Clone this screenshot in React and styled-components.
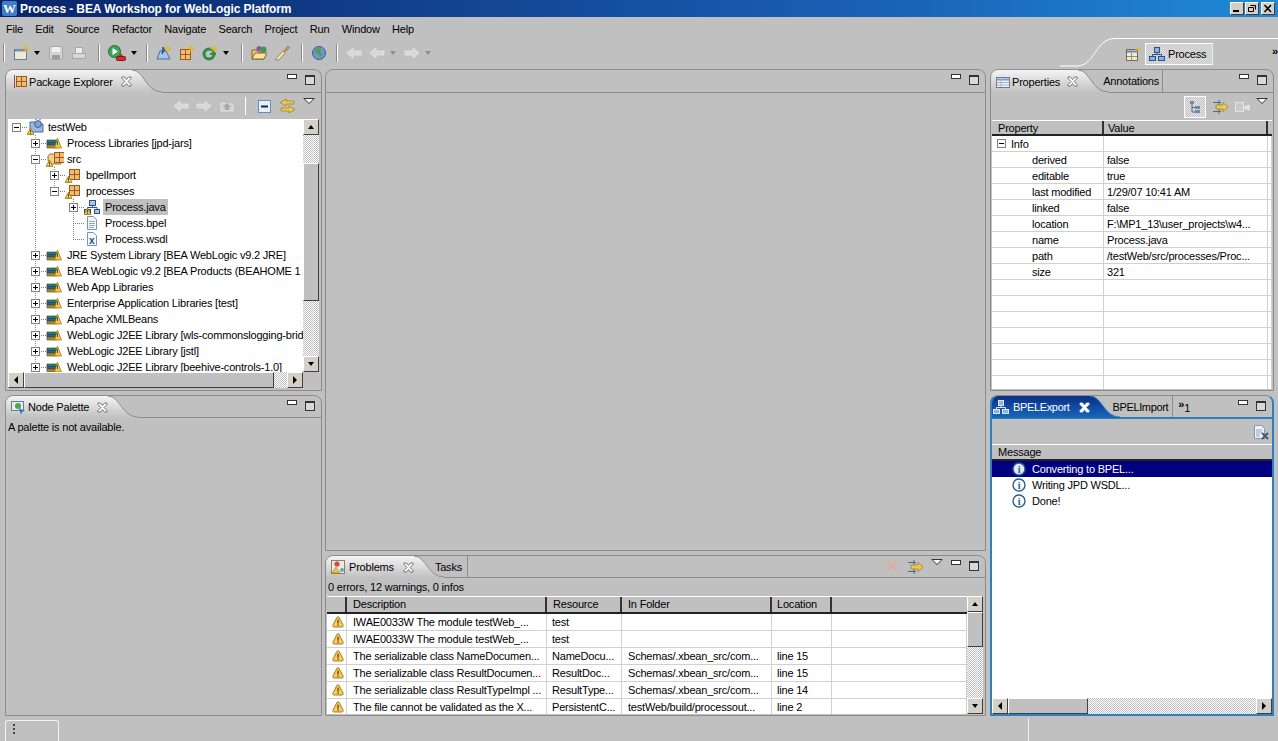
import React from 'react';
import styled, { createGlobalStyle } from 'styled-components';

const GlobalStyle = createGlobalStyle`
  html, body { margin: 0; padding: 0; height: 100%; background: #c0c0c0; }
  body { font-family: "Liberation Sans", Arial, sans-serif; font-size: 11px; letter-spacing: -0.2px; color: #000; overflow: hidden; }
  #root { height: 100%; }
`;

const dither = `repeating-conic-gradient(#fff 0 25%, #c0c0c0 0 50%) 0 0 / 2px 2px`;

const Page = styled.div`
  width: 1278px;
  height: 741px;
  display: flex;
  flex-direction: column;
  background: #c0c0c0;
  overflow: hidden;
`;

const TitleBar = styled.div`
  height: 17px;
  flex: none;
  display: flex;
  align-items: center;
  padding: 0 3px 0 2px;
  background: linear-gradient(90deg, #0a246a 0%, #1a62b8 70%, #1f8ad6 100%);
`;

const TitleText = styled.div`
  color: #fff;
  font-weight: bold;
  font-size: 12px;
  letter-spacing: -0.1px;
  flex: 1;
  margin-left: 3px;
  white-space: nowrap;
`;

const WinButton = styled.div`
  width: 14px;
  height: 13px;
  margin-left: ${(p) => p.$ml || 1}px;
  background: #d4d0c8;
  box-sizing: border-box;
  border: 1px solid;
  border-color: #fff #404040 #404040 #fff;
  display: flex;
  align-items: center;
  justify-content: center;
`;

const MenuBar = styled.div`
  height: 23px;
  flex: none;
  display: flex;
  align-items: center;
  padding-left: 6px;
  gap: 12.4px;
`;

const MenuItem = styled.span`
  font-size: 11px;
`;

const MainToolbar = styled.div`
  height: 29px;
  flex: none;
  display: flex;
  align-items: flex-start;
  padding-left: 3px;
`;

const ToolGroup = styled.div`
  height: 26px;
  display: flex;
  align-items: center;
  gap: 7px;
  padding: 0 ${(p) => p.$end ?? 11}px 0 8px;
`;

const ToolSep = styled.div`
  width: 1px;
  height: 18px;
  margin-top: 4px;
  background: #8a8a8a;
  border-right: 1px solid #fff;
`;

const ToolSpacer = styled.div`
  flex: 1;
`;

const CaretWrap = styled.div`
  margin-left: -3px;
  width: 8px;
  display: flex;
  justify-content: center;
`;

const Caret = styled.div`
  width: 0;
  height: 0;
  border-left: 3.5px solid transparent;
  border-right: 3.5px solid transparent;
  border-top: 4px solid ${(p) => (p.$off ? '#8d8d8d' : '#000')};
`;

const PerspectiveCurve = styled.svg`
  width: 135px;
  height: 29px;
  flex: none;
  display: block;
  margin-top: -2px;
`;

const PerspectiveBar = styled.div`
  width: 163px;
  height: 30px;
  flex: none;
  margin-top: -2px;
  box-sizing: border-box;
  border-top: 1px solid #fff;
  display: flex;
  align-items: center;
  padding-left: 10px;
  gap: 4px;
`;

const PerspectiveButton = styled.div`
  width: 68px;
  height: 22px;
  box-sizing: border-box;
  border: 1px solid #fff;
  border-right-color: #efefef;
  background: repeating-conic-gradient(#dedede 0 25%, #c8c8c8 0 50%) 0 0 / 2px 2px;
  display: flex;
  align-items: center;
  padding-left: 3px;
  gap: 3px;
  font-size: 11px;
`;

const Chevrons = styled.span`
  margin-left: auto;
  font-size: 11px;
  font-weight: bold;
  position: relative;
  top: -3px;
`;

const Workspace = styled.div`
  flex: 1;
  min-height: 0;
  display: grid;
  grid-template-columns: 317px 661px 285px;
  column-gap: 3px;
  padding-left: 5px;
`;

const Column = styled.div`
  display: flex;
  flex-direction: column;
  gap: 4px;
  min-height: 0;
  padding-left: ${(p) => p.$inset ?? 0}px;
`;

const Panel = styled.section`
  box-sizing: border-box;
  height: ${(p) => p.$h}px;
  flex: none;
  display: flex;
  flex-direction: column;
  border: 1px solid #8c8c8c;
  border-radius: 8px 8px 0 0;
  background: #c0c0c0;
  overflow: hidden;
`;

const TabBar = styled.div`
  height: ${(p) => (p.$short ? 21 : 22)}px;
  flex: none;
  display: flex;
  align-items: stretch;
  border-bottom: 1px solid ${(p) => (p.$active ? '#2f7fbf' : '#8c8c8c')};
  ${(p) => (p.$active ? 'border-bottom-width: 2px;' : '')}
`;

const ActiveTab = styled.div`
  display: flex;
  align-items: center;
  height: ${(p) => (p.$short ? 22 : 23)}px;
  padding-left: ${(p) => p.$pad ?? 5}px;
  gap: ${(p) => p.$gap ?? 2}px;
  color: ${(p) => (p.$blue ? '#fff' : '#000')};
  background: ${(p) => (p.$blue
    ? 'linear-gradient(#0a2f86, #1668bb)'
    : 'linear-gradient(#f4f4f4, #c0c0c0)')};
  font-size: 11px;
  letter-spacing: ${(p) => (p.$tight ? '-0.35px' : 'inherit')};
  white-space: nowrap;
`;

const TabCurve = styled.svg`
  width: 30px;
  height: ${(p) => (p.$short ? 22 : 23)}px;
  flex: none;
  display: block;
`;

const InactiveTab = styled.div`
  display: flex;
  align-items: center;
  padding: 0 ${(p) => p.$right ?? 4}px 0 0;
  margin-left: ${(p) => p.$left ?? 0}px;
  border-right: 1px solid #8c8c8c;
  font-size: 11px;
  letter-spacing: ${(p) => (p.$tight ? '-0.35px' : 'inherit')};
  white-space: nowrap;
`;

const OverflowTab = styled.div`
  margin-left: 5px;
  font-size: 11px;
  line-height: 10px;
  padding-top: 3px;
  font-weight: bold;
  sub { font-weight: normal; font-size: 11px; vertical-align: -4px; }
`;

const TabSpacer = styled.div`
  flex: 1;
`;

const TabTools = styled.div`
  display: flex;
  align-items: flex-start;
  padding: 3px 6px 0 0;
  gap: ${(p) => p.$gap ?? 8}px;
`;

const MinBtn = styled.div`
  width: 8px;
  height: 3px;
  margin-top: 1px;
  background: #fff;
  border: 1px solid #333;
`;

const MaxBtn = styled.div`
  width: 8px;
  height: 7px;
  margin-top: 2px;
  background: #d8d8d8;
  border: 1px solid #333;
  border-top-width: 2px;
`;

const ViewMenu = styled.div`
  width: 0;
  height: 0;
  border-left: 6px solid transparent;
  border-right: 6px solid transparent;
  border-top: 6px solid #333;
  position: relative;
  &::after {
    content: '';
    position: absolute;
    left: -4px;
    top: -5px;
    border-left: 4px solid transparent;
    border-right: 4px solid transparent;
    border-top: 4px solid #fff;
  }
`;

const ViewToolbar = styled.div`
  height: ${(p) => p.$h ?? 26}px;
  flex: none;
  display: flex;
  align-items: center;
  justify-content: flex-end;
  gap: ${(p) => p.$gap ?? 7}px;
  padding-right: ${(p) => p.$right ?? 6}px;
`;

const ToolbarLine = styled.div`
  width: 1px;
  height: 18px;
  margin: 0 3px;
  background: #fff;
`;

const MenuSlot = styled.div`
  align-self: flex-start;
  margin-top: ${(p) => p.$top ?? 5}px;
`;

const ToggledTool = styled.div`
  width: 22px;
  height: 22px;
  box-sizing: border-box;
  border: 1px solid #fff;
  background: repeating-conic-gradient(#e6e6e6 0 25%, #c4c4c4 0 50%) 0 0 / 2px 2px;
  display: flex;
  align-items: center;
  justify-content: center;
`;

const TreeFrame = styled.div`
  flex: none;
  height: 269px;
  margin: 0 2px 0 2px;
  display: grid;
  grid-template-columns: 295px 16px;
  grid-template-rows: 253px 16px;
`;

const TreeArea = styled.div`
  background: #fff;
  overflow: hidden;
`;

const TreeRowWrap = styled.div`
  height: 16px;
  display: flex;
  align-items: stretch;
  white-space: nowrap;
`;

const GuideCell = styled.div`
  width: 19px;
  flex: none;
  background: ${(p) => (p.$line
    ? 'repeating-linear-gradient(#808080 0 1px, transparent 1px 2px) 8px 0 / 1px 100% no-repeat'
    : 'none')};
`;

const ExpanderCell = styled.div`
  width: 19px;
  flex: none;
  display: flex;
  align-items: center;
  background:
    repeating-linear-gradient(90deg, #808080 0 1px, transparent 1px 2px) 8px 8px / 11px 1px no-repeat
    ${(p) => (p.$down ? ', repeating-linear-gradient(#808080 0 1px, transparent 1px 2px) 8px 8px / 1px 8px no-repeat' : '')}
    ${(p) => (p.$up ? ', repeating-linear-gradient(#808080 0 1px, transparent 1px 2px) 8px 0 / 1px 8px no-repeat' : '')};
`;

const ExpanderBox = styled.div`
  width: 9px;
  height: 9px;
  margin-left: 4px;
  flex: none;
  position: relative;
  box-sizing: border-box;
  border: 1px solid #808080;
  background: #fff;
  &::before {
    content: '';
    position: absolute;
    left: 1px;
    right: 1px;
    top: 3px;
    height: 1px;
    background: #000;
  }
  ${(p) => (p.$plus ? `&::after {
    content: '';
    position: absolute;
    top: 1px;
    bottom: 1px;
    left: 3px;
    width: 1px;
    background: #000;
  }` : '')}
`;

const RowIcon = styled.div`
  width: 16px;
  height: 16px;
  flex: none;
`;

const RowLabel = styled.span`
  margin-left: 3px;
  padding: 0 2px;
  line-height: 16px;
  font-size: 11px;
  background: ${(p) => (p.$selected ? '#c0c0c0' : 'transparent')};
`;

const VScroll = styled.div`
  width: 16px;
  display: flex;
  flex-direction: column;
  background: ${dither};
  overflow: hidden;
`;

const HScroll = styled.div`
  height: 16px;
  flex: none;
  display: flex;
  background: ${dither};
  overflow: hidden;
`;

const ScrollButton = styled.div`
  width: 16px;
  height: 16px;
  flex: none;
  box-sizing: border-box;
  background: #d4d0c8;
  border: 1px solid;
  border-color: #fff #404040 #404040 #fff;
  display: flex;
  align-items: center;
  justify-content: center;
`;

const Thumb = styled.div`
  flex: none;
  box-sizing: border-box;
  width: ${(p) => (p.$w ? `${p.$w}px` : '16px')};
  height: ${(p) => (p.$h ? `${p.$h}px` : '16px')};
  background: #c0c0c0;
  border: 1px solid;
  border-color: #fff #404040 #404040 #fff;
`;

const Track = styled.div`
  flex: ${(p) => (p.$size ? `0 0 ${p.$size}px` : '1')};
`;

const ScrollCorner = styled.div`
  background: #c0c0c0;
`;

const PropertyTable = styled.div`
  margin: 0 1px;
  height: 269px;
  overflow: hidden;
  display: flex;
  flex-direction: column;
`;

const GridRow = styled.div`
  display: grid;
  grid-template-columns: ${(p) => p.$cols};
  height: ${(p) => p.$h ?? 16}px;
  flex: none;
  background: #fff;
`;

const HeaderRow = styled(GridRow)`
  background: #c0c0c0;
  height: ${(p) => p.$h ?? 17}px;
  box-sizing: border-box;
  border-top: 1px solid #fff;
  border-bottom: 2px solid #222;
`;

const HeaderCell = styled.div`
  padding-left: ${(p) => p.$pad ?? 5}px;
  border-right: 2px solid ${(p) => (p.$last ? 'transparent' : '#333')};
  line-height: 14px;
  font-size: 11px;
  white-space: nowrap;
  overflow: hidden;
`;

const Cell = styled.div`
  box-sizing: border-box;
  border-right: 1px solid #d0d0d0;
  border-bottom: 1px solid #d0d0d0;
  padding-left: ${(p) => p.$pad ?? 3}px;
  font-size: 11px;
  white-space: nowrap;
  overflow: hidden;
  display: flex;
  align-items: center;
`;

const InfoToggle = styled(ExpanderBox)`
  margin: 0 5px 0 0;
`;

const PaletteNote = styled.div`
  padding: 1px 2px;
  font-size: 11px;
  line-height: 16px;
`;

const ProblemsSummary = styled.div`
  height: 18px;
  flex: none;
  padding: 1px 2px 0;
  box-sizing: border-box;
  line-height: 16px;
  font-size: 11px;
`;

const ProblemsBody = styled.div`
  margin: 0 3px 0 1px;
  height: 118px;
  display: grid;
  grid-template-columns: 640px 16px;
`;

const ProblemsRows = styled.div`
  overflow: hidden;
  display: flex;
  flex-direction: column;
  background: #fff;
`;

const MessageArea = styled.div`
  flex: 1;
  min-height: 0;
  display: flex;
  flex-direction: column;
  background: #fff;
`;

const MessageRow = styled.div`
  height: 16px;
  display: flex;
  align-items: center;
  padding-left: 20px;
  gap: 6px;
  flex: none;
  font-size: 11px;
  background: ${(p) => (p.$selected ? '#000080' : 'transparent')};
  color: ${(p) => (p.$selected ? '#fff' : '#000')};
`;

const MessageFill = styled.div`
  flex: 1;
`;

const ActivePanel = styled(Panel)`
  border: 2px solid #2f7fbf;
  border-top: 1px solid #8c8c8c;
`;

const StatusBar = styled.div`
  height: 25px;
  flex: none;
  display: flex;
  align-items: flex-end;
  padding-left: 5px;
`;

const StatusGrip = styled.div`
  width: 54px;
  height: 21px;
  box-sizing: border-box;
  border: 1px solid #f2f2f2;
  border-bottom: none;
  border-radius: 3px 3px 0 0;
  padding: 3px 0 0 7px;
`;

const GripDots = styled.div`
  width: 2px;
  height: 11px;
  background: repeating-linear-gradient(#444 0 2px, transparent 2px 4px);
`;

const StatusDivider = styled.div`
  width: 1px;
  height: 23px;
  margin-left: 969px;
  background: #f2f2f2;
`;

const CloseSvg = styled.svg`
  display: block;
  flex: none;
  margin-left: 6px;
`;

/* ---- drawn icons ---- */

const Svg = ({ w = 16, h = 16, children }) => (
  <svg width={w} height={h} viewBox={`0 0 ${w} ${h}`} style={{ display: 'block' }}>{children}</svg>
);

const WarnBadge = () => (
  <g>
    <path d="M3.5 9 L7 15.5 L0 15.5 Z" fill="#f6c83c" stroke="#8a6a10" strokeWidth=".7" />
    <rect x="3.1" y="11" width=".9" height="2.4" fill="#333" />
    <rect x="3.1" y="14" width=".9" height=".9" fill="#333" />
  </g>
);

const PackageGrid = ({ x = 3, y = 2 }) => (
  <g stroke="#a05a1c" strokeWidth="1" fill="#edbd78">
    <rect x={x + 0.5} y={y + 0.5} width="5" height="5" />
    <rect x={x + 5.5} y={y + 0.5} width="5" height="5" />
    <rect x={x + 0.5} y={y + 5.5} width="5" height="5" />
    <rect x={x + 5.5} y={y + 5.5} width="5" height="5" />
  </g>
);

const PackageIcon = () => <Svg><PackageGrid x={4} y={2} /><WarnBadge /></Svg>;

const LibraryIcon = () => (
  <Svg>
    <rect x="1" y="5" width="10" height="2.5" fill="#2f7d5c" stroke="#1c4a36" strokeWidth=".6" />
    <rect x="1" y="7.5" width="10" height="2.5" fill="#2a5e9c" stroke="#1c3960" strokeWidth=".6" />
    <rect x="1" y="10" width="10" height="3" fill="#a98b2a" stroke="#5a4a10" strokeWidth=".6" />
    <path d="M11.5 3 L15.5 13 L8.5 13 Z" fill="#f0c63c" stroke="#8a6a10" strokeWidth=".6" />
    <rect x="11" y="6" width="1" height="4" fill="#555" />
  </Svg>
);

const ProjectIcon = () => (
  <Svg w={18}>
    <path d="M3 3 h6 l2 2 h5 v8 h-13 z" fill="#9cb8dc" stroke="#4a6a98" />
    <circle cx="11" cy="5" r="3.4" fill="#7fa6d8" stroke="#2a4f88" strokeWidth=".8" />
    <path d="M9 1 v-1 M13 1 v-1" stroke="#2a4f88" />
    <WarnBadge />
  </Svg>
);

const SrcIcon = () => (
  <Svg w={18}>
    <path d="M2 6 C2 2 8 2 9 5 L15 5 L15 13 L4 13 C2 11 2 9 2 6Z" fill="#f2d08a" stroke="#a0702a" />
    <PackageGrid x={8} y={1} />
    <WarnBadge />
  </Svg>
);

const ProcessNodes = () => (
  <g stroke="#27508f" strokeWidth="1">
    <rect x="5.5" y="1.5" width="6" height="5" fill="#a9c6ea" />
    <rect x="0.5" y="10.5" width="6" height="4" fill="#a9c6ea" />
    <rect x="10.5" y="10.5" width="5" height="4" fill="#a9c6ea" />
    <path d="M8.5 6.5 V8.5 H3.5 V10.5 M8.5 8.5 H13 V10.5" fill="none" />
  </g>
);

const ProcessIcon = () => <Svg><ProcessNodes /><WarnBadge /></Svg>;

const FileIcon = () => (
  <Svg>
    <path d="M3.5 1.5 h6 l3 3 v10 h-9 z" fill="#f4f8fc" stroke="#7a94b4" />
    <path d="M5 6.5 h6 M5 8.5 h6 M5 10.5 h6 M5 12.5 h5" stroke="#8ea8c8" />
  </Svg>
);

const WsdlIcon = () => (
  <Svg>
    <path d="M3.5 1.5 h6 l3 3 v10 h-9 z" fill="#f4f8fc" stroke="#7a94b4" />
    <text x="5" y="13" fontSize="10" fontWeight="bold" fontFamily="Liberation Sans" fill="#24508c">x</text>
  </Svg>
);

const CloseX = ({ light }) => (
  <CloseSvg width="11" height="11" viewBox="0 0 11 11">
    <path
      d="M1 1 h2.5 L5.5 3.5 L7.5 1 H10 V2.5 L7 5.5 L10 8.5 V10 H7.5 L5.5 7.5 L3.5 10 H1 V8.5 L4 5.5 L1 2.5 Z"
      fill="#fff"
      stroke={light ? '#fff' : '#555'}
      strokeWidth=".8"
    />
  </CloseSvg>
);

const Curve = ({ blue, short }) => {
  const id = blue ? 'tab-blue' : 'tab-gray';
  return (
    <TabCurve $short={short} viewBox="0 0 30 23" preserveAspectRatio="none">
      <defs>
        <linearGradient id={id} x1="0" y1="0" x2="0" y2="1">
          <stop offset="0" stopColor={blue ? '#0a2f86' : '#f4f4f4'} />
          <stop offset="1" stopColor={blue ? '#1668bb' : '#c0c0c0'} />
        </linearGradient>
      </defs>
      <path d="M0 0 C12 0 14 22 30 22 L30 23 L0 23 Z" fill={`url(#${id})`} />
      <path d="M0 0 C12 0 14 22 30 22" fill="none" stroke={blue ? '#2f7fbf' : '#8c8c8c'} />
    </TabCurve>
  );
};

const ExplorerTabIcon = () => (
  <Svg>
    <path d="M3.5 1 V14" stroke="#9a4a30" />
    <PackageGrid x={5} y={2} />
  </Svg>
);

const PaletteTabIcon = () => (
  <Svg>
    <rect x="1.5" y="2.5" width="12" height="9" fill="#e4ecf4" stroke="#6a7c90" />
    <circle cx="8" cy="7" r="3" fill="#4aa84a" />
    <path d="M9 9 L15 12 L12 13 L11 16 Z" fill="#3a72b8" />
  </Svg>
);

const PropsTabIcon = () => (
  <Svg>
    <rect x="1.5" y="3.5" width="13" height="10" fill="#eef2f8" stroke="#6a7c90" />
    <path d="M1.5 5.5 h13" stroke="#7a9cc8" strokeWidth="2" />
    <path d="M2 8.5 h12 M2 11 h12 M6 5 v8" stroke="#a8b4c4" />
  </Svg>
);

const ProblemsTabIcon = () => (
  <Svg>
    <rect x="1.5" y="1.5" width="13" height="13" fill="#efeae0" stroke="#8a7f70" />
    <circle cx="7" cy="5" r="2.6" fill="#d04848" />
    <path d="M6 8 L10 14 L2 14 Z" fill="#f0c63c" stroke="#8a6a10" strokeWidth=".5" />
    <circle cx="12" cy="11" r="2" fill="#6a9ad8" />
  </Svg>
);

const NetworkTabIcon = ({ light }) => (
  <Svg>
    <g stroke={light ? '#dbe8f8' : '#27508f'} strokeWidth="1">
      <rect x="5.5" y="1.5" width="5" height="5" fill="#8fb2dc" />
      <rect x="0.5" y="10.5" width="6" height="4" fill="#8fb2dc" />
      <rect x="9.5" y="10.5" width="6" height="4" fill="#8fb2dc" />
      <path d="M8 6.5 V8.5 H3.5 V10.5 M8 8.5 H12.5 V10.5" fill="none" />
    </g>
  </Svg>
);

const NewIcon = () => (
  <Svg>
    <rect x="1.5" y="4.5" width="12" height="10" fill="#f2ead0" stroke="#5a7ca8" />
    <path d="M2 5.5 h11" stroke="#6f93c4" strokeWidth="2" />
    <path d="M13 0 v7 M9.5 3.5 h7 M10.5 1 l5 5 M15.5 1 l-5 5" stroke="#e8b820" />
  </Svg>
);

const SaveIcon = () => (
  <Svg>
    <path d="M1.5 1.5 h13 v13 h-13z" fill="#d4d4d4" stroke="#a8a8a8" />
    <rect x="4" y="2" width="8" height="5" fill="#f0f0f0" />
    <rect x="4" y="10" width="8" height="4" fill="#9c9c9c" />
  </Svg>
);

const PrintIcon = () => (
  <Svg>
    <rect x="4.5" y="2.5" width="7" height="6" fill="#ececec" stroke="#a8a8a8" />
    <rect x="1.5" y="8.5" width="13" height="5" fill="#d6d6d6" stroke="#a8a8a8" />
  </Svg>
);

const RunIcon = () => (
  <Svg w={18}>
    <circle cx="6.5" cy="6.5" r="6" fill="#3aa858" stroke="#1f6a34" />
    <path d="M4.5 3 L10 6.5 L4.5 10 Z" fill="#fff" />
    <rect x="8.5" y="11.5" width="9" height="4" rx="1" fill="#c83030" stroke="#7a1818" />
    <path d="M11 11 L13 8 L15 11Z" fill="#c83030" />
  </Svg>
);

const NewPackageIcon = () => (
  <Svg>
    <path d="M1 14 L4 6 H10 L14 14 Z" fill="#a8c4e8" stroke="#4a6c9c" />
    <path d="M6 9 L7 2 L9 5Z" fill="#3a72b8" stroke="#2a4f88" />
    <path d="M12 0 v7 M8.5 3.5 h7 M9.5 1 l5 5 M14.5 1 l-5 5" stroke="#e8b820" />
  </Svg>
);

const NewClassIcon = () => (
  <Svg>
    <PackageGrid x={1} y={4} />
    <path d="M12 0 v7 M8.5 3.5 h7 M9.5 1 l5 5 M14.5 1 l-5 5" stroke="#e8b820" />
  </Svg>
);

const NewRefreshIcon = () => (
  <Svg>
    <circle cx="7" cy="9" r="5" fill="none" stroke="#2f8a48" strokeWidth="3" />
    <rect x="8" y="8" width="6" height="2" fill="#2f8a48" />
    <path d="M12 0 v7 M8.5 3.5 h7 M9.5 1 l5 5 M14.5 1 l-5 5" stroke="#e8b820" />
  </Svg>
);

const OpenFolderIcon = () => (
  <Svg>
    <path d="M1 14 V5 h5 l1 2 h6 v7 Z" fill="#f0cc80" stroke="#8a6420" />
    <path d="M1 14 L4 8 H16 L13 14 Z" fill="#f8e2a8" stroke="#8a6420" />
    <circle cx="8" cy="3.5" r="2.5" fill="#8a52a8" />
    <circle cx="12.5" cy="4.5" r="3" fill="#3a9a4a" />
  </Svg>
);

const BrushIcon = () => (
  <Svg>
    <path d="M9 7 L14 1 L15.5 2.5 L10 8 Z" fill="#c89858" stroke="#8a6420" strokeWidth=".6" />
    <path d="M9 6 L11 8 L5 15 L1 15 Z" fill="#f2e6c0" stroke="#a08a50" />
  </Svg>
);

const GlobeIcon = () => (
  <Svg>
    <circle cx="8" cy="8" r="6.5" fill="#6a98d0" stroke="#3a5a88" />
    <path d="M5 3 L10 4 L9 7 L12 9 L9 12 L7 9 L4 7 Z" fill="#5a9a50" />
  </Svg>
);

const ArrowIcon = ({ dir = 'left', color = '#d8d8d8' }) => (
  <Svg>
    <path
      d={dir === 'left' ? 'M1 8 L7 3 V6 H15 V10 H7 V13 Z' : 'M15 8 L9 3 V6 H1 V10 H9 V13 Z'}
      fill={color}
      stroke="#ececec"
      strokeWidth=".6"
    />
  </Svg>
);

const UpFolderIcon = () => (
  <Svg>
    <path d="M2 13 V5 h4 l1 1 h7 v7 Z" fill="#d0d0d0" stroke="#e4e4e4" />
    <path d="M8 5 L12 9 H10 V12 H6 V9 H4 Z" fill="#a8a8a8" />
  </Svg>
);

const CollapseIcon = () => (
  <Svg>
    <rect x="2.5" y="2.5" width="12" height="12" fill="#e4eefa" stroke="#6a8cb8" />
    <path d="M5 8.5 h7" stroke="#223" strokeWidth="2" />
  </Svg>
);

const LinkIcon = () => (
  <Svg w={17}>
    <path d="M7 1 L1 4.5 L7 8 V6 H15 V3 H7 Z" fill="#f0c850" stroke="#9a7a20" strokeWidth=".7" />
    <path d="M10 8 L16 11.5 L10 15 V13 H2 V10 H10 Z" fill="#f0c850" stroke="#9a7a20" strokeWidth=".7" />
  </Svg>
);

const TreeModeIcon = () => (
  <Svg>
    <rect x="3" y="2" width="4" height="3" fill="#6f8ba8" />
    <path d="M5 5 V13 H8 M5 8.5 H8" stroke="#5a6a78" fill="none" />
    <rect x="8" y="7" width="5" height="3" fill="#6f8ba8" />
    <rect x="8" y="11" width="5" height="3" fill="#6f8ba8" />
  </Svg>
);

const FilterArrowsIcon = () => (
  <Svg>
    <path d="M1 3.5 h8 M1 12.5 h8" stroke="#4a6a8c" />
    <path d="M7 1 V15" stroke="#4a6a8c" />
    <path d="M4 6 H11 V3.5 L16 8 L11 12.5 V10 H4 Z" fill="#f0c850" stroke="#9a7a20" strokeWidth=".7" />
  </Svg>
);

const AdvancedIcon = () => (
  <Svg>
    <rect x="1" y="3" width="9" height="10" fill="#e4e4e4" />
    <path d="M2 5 h7 M2 7 h7 M2 9 h7 M2 11 h7" stroke="#b0b0b0" />
    <path d="M15 6 L10 8.5 L15 11 Z" fill="#dcdcdc" stroke="#f0f0f0" />
  </Svg>
);

const ClearLogIcon = () => (
  <Svg>
    <path d="M1.5 1.5 h7 l3 3 v10 h-10 z" fill="#f0f4fa" stroke="#8498b0" />
    <path d="M3 6 h6 M3 8 h6 M3 10 h4 M3 12 h4" stroke="#8ea8c8" />
    <path d="M9 9 L15 15 M15 9 L9 15" stroke="#4a5a6a" strokeWidth="2" />
  </Svg>
);

const RemoveIcon = () => (
  <Svg w={14} h={14}>
    <path d="M2 2 L12 12 M12 2 L2 12" stroke="#d8b0a8" strokeWidth="2.5" />
  </Svg>
);

const NewPerspectiveIcon = () => (
  <Svg>
    <rect x="1.5" y="3.5" width="11" height="11" fill="#f2ead0" stroke="#7a6a50" />
    <path d="M2 5.5 h10" stroke="#5f87bc" strokeWidth="2" />
    <path d="M6.5 7 V14 M2 10.5 H12" stroke="#9a8a70" />
    <path d="M13 0 v6 M10 3 h6" stroke="#e8b820" />
  </Svg>
);

const WarnIcon = () => (
  <svg width="12" height="12" viewBox="0 0 12 12" style={{ display: 'block', flex: 'none' }}>
    <path d="M6 .8 C6.8 .8 7 1.3 7.4 2 L11 9 C11.5 10 11 11 10 11 H2 C1 11 .5 10 1 9 L4.6 2 C5 1.3 5.2 .8 6 .8 Z" fill="#f6cc5a" stroke="#a07a20" />
    <rect x="5.4" y="3.6" width="1.3" height="4" fill="#5a4210" />
    <rect x="5.4" y="8.4" width="1.3" height="1.3" fill="#5a4210" />
  </svg>
);

const InfoIcon = ({ selected }) => (
  <svg width="14" height="14" viewBox="0 0 14 14" style={{ display: 'block', flex: 'none' }}>
    <circle cx="7" cy="7" r="6" fill={selected ? '#dfeaf6' : '#fff'} stroke="#24608c" strokeWidth="1.4" />
    <text x="7" y="11" textAnchor="middle" fontSize="10" fontWeight="bold" fontFamily="Liberation Serif" fill="#24608c">i</text>
  </svg>
);

const LogoIcon = () => (
  <svg width="15" height="15" viewBox="0 0 15 15" style={{ display: 'block', flex: 'none' }}>
    <rect width="15" height="15" rx="2" fill="#3f7fc8" />
    <text x="7.5" y="12" textAnchor="middle" fontSize="13" fontWeight="bold" fontFamily="Liberation Serif" fill="#fff">W</text>
  </svg>
);

const Tri = ({ dir }) => {
  const d = { up: 'M1 6 L4 2 L7 6 Z', down: 'M1 2 L4 6 L7 2 Z', left: 'M6 0 L2 4 L6 8 Z', right: 'M2 0 L6 4 L2 8 Z' }[dir];
  return (
    <svg width="8" height="8" viewBox="0 0 8 8" style={{ display: 'block' }}><path d={d} fill="#000" /></svg>
  );
};

const VerticalBar = ({ top, thumb, after }) => (
  <VScroll>
    <ScrollButton><Tri dir="up" /></ScrollButton>
    {top > 0 && <Track $size={top} />}
    <Thumb $h={thumb} />
    <Track $size={after} />
    <ScrollButton><Tri dir="down" /></ScrollButton>
  </VScroll>
);

const HorizontalBar = ({ thumb }) => (
  <HScroll>
    <ScrollButton><Tri dir="left" /></ScrollButton>
    <Thumb $w={thumb} />
    <Track />
    <ScrollButton><Tri dir="right" /></ScrollButton>
  </HScroll>
);

const PanelControls = ({ gap = 8 }) => (
  <TabTools $gap={gap}>
    <MinBtn />
    <MaxBtn />
  </TabTools>
);

/* ---- data ---- */

const menus = ['File', 'Edit', 'Source', 'Refactor', 'Navigate', 'Search', 'Project', 'Run', 'Window', 'Help'];

// guides: one entry per ancestor level, true where that level's dotted line runs through the row
const libraryRow = (label) => ({ label, guides: [false], plus: true, icon: <LibraryIcon />, up: true, down: true });

const treeRows = [
  { label: 'testWeb', guides: [], icon: <ProjectIcon /> },
  libraryRow('Process Libraries [jpd-jars]'),
  { label: 'src', guides: [false], icon: <SrcIcon />, up: true, down: true },
  { label: 'bpelImport', guides: [false, true], plus: true, icon: <PackageIcon />, up: true, down: true },
  { label: 'processes', guides: [false, true], icon: <PackageIcon />, up: true },
  { label: 'Process.java', guides: [false, true, false], plus: true, icon: <ProcessIcon />, selected: true, up: true, down: true },
  { label: 'Process.bpel', guides: [false, true, false], leaf: true, icon: <FileIcon />, up: true, down: true },
  { label: 'Process.wsdl', guides: [false, true, false], leaf: true, icon: <WsdlIcon />, up: true },
  libraryRow('JRE System Library [BEA WebLogic v9.2 JRE]'),
  libraryRow('BEA WebLogic v9.2 [BEA Products (BEAHOME 1'),
  libraryRow('Web App Libraries'),
  libraryRow('Enterprise Application Libraries [test]'),
  libraryRow('Apache XMLBeans'),
  libraryRow('WebLogic J2EE Library [wls-commonslogging-bridge]'),
  libraryRow('WebLogic J2EE Library [jstl]'),
  libraryRow('WebLogic J2EE Library [beehive-controls-1.0]'),
];

const properties = [
  ['derived', 'false'],
  ['editable', 'true'],
  ['last modified', '1/29/07 10:41 AM'],
  ['linked', 'false'],
  ['location', 'F:\\MP1_13\\user_projects\\w4...'],
  ['name', 'Process.java'],
  ['path', '/testWeb/src/processes/Proc...'],
  ['size', '321'],
  ['', ''], ['', ''], ['', ''], ['', ''], ['', ''], ['', ''], ['', ''], ['', ''],
];

const problems = [
  ['IWAE0033W The module testWeb_...', 'test', '', ''],
  ['IWAE0033W The module testWeb_...', 'test', '', ''],
  ['The serializable class NameDocumen...', 'NameDocu...', 'Schemas/.xbean_src/com...', 'line 15'],
  ['The serializable class ResultDocumen...', 'ResultDoc...', 'Schemas/.xbean_src/com...', 'line 15'],
  ['The serializable class ResultTypeImpl ...', 'ResultType...', 'Schemas/.xbean_src/com...', 'line 14'],
  ['The file cannot be validated as the X...', 'PersistentC...', 'testWeb/build/processout...', 'line 2'],
];

const messages = ['Converting to BPEL...', 'Writing JPD WSDL...', 'Done!'];

const propCols = '112px 164px 4px';
const problemCols = '20px 200px 75px 150px 60px 135px';

const TreeRow = ({ row }) => (
  <TreeRowWrap>
    {row.guides.map((line, i) => <GuideCell key={i} $line={line} />)}
    <ExpanderCell $down={row.down} $up={row.up}>
      {!row.leaf && <ExpanderBox $plus={row.plus} />}
    </ExpanderCell>
    <RowIcon>{row.icon}</RowIcon>
    <RowLabel $selected={row.selected}>{row.label}</RowLabel>
  </TreeRowWrap>
);

export default function App() {
  return (
    <Page>
      <GlobalStyle />
      <TitleBar>
        <LogoIcon />
        <TitleText>Process - BEA Workshop for WebLogic Platform</TitleText>
        <WinButton>
          <Svg w={10} h={9}><rect x="1" y="6" width="6" height="2" fill="#000" /></Svg>
        </WinButton>
        <WinButton>
          <Svg w={10} h={9}>
            <path d="M3.5 1.5 h5 v4 M1.5 3.5 h5 v4 h-5 z" fill="none" stroke="#000" />
          </Svg>
        </WinButton>
        <WinButton $ml={2}>
          <Svg w={10} h={9}><path d="M1.5 1 L8 8 M8 1 L1.5 8" stroke="#000" strokeWidth="1.6" /></Svg>
        </WinButton>
      </TitleBar>

      <MenuBar>
        {menus.map((m) => <MenuItem key={m}>{m}</MenuItem>)}
      </MenuBar>

      <MainToolbar>
        <ToolSep />
        <ToolGroup>
          <NewIcon /><CaretWrap><Caret /></CaretWrap>
          <SaveIcon /><PrintIcon />
        </ToolGroup>
        <ToolSep />
        <ToolGroup $end={8}>
          <RunIcon /><CaretWrap><Caret /></CaretWrap>
        </ToolGroup>
        <ToolSep />
        <ToolGroup>
          <NewPackageIcon /><NewClassIcon /><NewRefreshIcon /><CaretWrap><Caret /></CaretWrap>
        </ToolGroup>
        <ToolSep />
        <ToolGroup>
          <OpenFolderIcon /><BrushIcon />
        </ToolGroup>
        <ToolSep />
        <ToolGroup $end={9}>
          <GlobeIcon />
        </ToolGroup>
        <ToolSep />
        <ToolGroup>
          <ArrowIcon /><ArrowIcon /><CaretWrap><Caret $off /></CaretWrap>
          <ArrowIcon dir="right" /><CaretWrap><Caret $off /></CaretWrap>
        </ToolGroup>
        <ToolSpacer />
        <PerspectiveCurve viewBox="0 0 135 29">
          <path d="M80 28 H97 C115 28 115 .5 135 .5" fill="none" stroke="#fff" />
        </PerspectiveCurve>
        <PerspectiveBar>
          <NewPerspectiveIcon />
          <PerspectiveButton><NetworkTabIcon />Process</PerspectiveButton>
          <Chevrons>»</Chevrons>
        </PerspectiveBar>
      </MainToolbar>

      <Workspace>
        <Column>
          <Panel $h={322}>
            <TabBar>
              <ActiveTab>
                <ExplorerTabIcon />Package Explorer<CloseX />
              </ActiveTab>
              <Curve />
              <TabSpacer />
              <PanelControls />
            </TabBar>
            <ViewToolbar>
              <ArrowIcon /><ArrowIcon dir="right" /><UpFolderIcon />
              <ToolbarLine />
              <CollapseIcon /><LinkIcon />
              <MenuSlot><ViewMenu /></MenuSlot>
            </ViewToolbar>
            <TreeFrame>
              <TreeArea>
                {treeRows.map((row) => <TreeRow key={row.label} row={row} />)}
              </TreeArea>
              <VerticalBar top={28} thumb={138} after={55} />
              <HorizontalBar thumb={250} />
              <ScrollCorner />
            </TreeFrame>
          </Panel>
          <Panel $h={321}>
            <TabBar $short>
              <ActiveTab $short $pad={4}>
                <PaletteTabIcon />Node Palette<CloseX />
              </ActiveTab>
              <Curve short />
              <TabSpacer />
              <PanelControls />
            </TabBar>
            <PaletteNote>A palette is not available.</PaletteNote>
          </Panel>
        </Column>

        <Column>
          <Panel $h={482}>
            <TabBar>
              <TabSpacer />
              <PanelControls />
            </TabBar>
          </Panel>
          <Panel $h={161}>
            <TabBar $short>
              <ActiveTab $short $pad={4} $gap={3}>
                <ProblemsTabIcon />Problems<CloseX />
              </ActiveTab>
              <Curve short />
              <InactiveTab $left={-9} $right={5}>Tasks</InactiveTab>
              <TabSpacer />
              <TabTools $gap={8}>
                <RemoveIcon />
                <FilterArrowsIcon />
                <MenuSlot $top={0}><ViewMenu /></MenuSlot>
                <MinBtn />
                <MaxBtn />
              </TabTools>
            </TabBar>
            <ProblemsSummary>0 errors, 12 warnings, 0 infos</ProblemsSummary>
            <ProblemsBody>
              <ProblemsRows>
                <HeaderRow $cols={problemCols} $h={18}>
                  <HeaderCell />
                  <HeaderCell $pad={6}>Description</HeaderCell>
                  <HeaderCell $pad={6}>Resource</HeaderCell>
                  <HeaderCell $pad={6}>In Folder</HeaderCell>
                  <HeaderCell>Location</HeaderCell>
                  <HeaderCell $last />
                </HeaderRow>
                {problems.map((p, i) => (
                  <GridRow key={i} $cols={problemCols} $h={17}>
                    <Cell $pad={5}><WarnIcon /></Cell>
                    {p.map((text, j) => <Cell key={j} $pad={j === 1 || j === 3 ? 5 : 6}>{text}</Cell>)}
                    <Cell />
                  </GridRow>
                ))}
              </ProblemsRows>
              <VerticalBar top={0} thumb={35} after={51} />
            </ProblemsBody>
          </Panel>
        </Column>

        <Column $inset={1}>
          <Panel $h={322}>
            <TabBar>
              <ActiveTab $pad={4} $gap={1}>
                <PropsTabIcon />Properties<CloseX />
              </ActiveTab>
              <Curve />
              <InactiveTab $left={-5} $right={3}>Annotations</InactiveTab>
              <TabSpacer />
              <PanelControls />
            </TabBar>
            <ViewToolbar $h={27} $gap={6} $right={5}>
              <ToggledTool><TreeModeIcon /></ToggledTool>
              <FilterArrowsIcon />
              <AdvancedIcon />
              <MenuSlot><ViewMenu /></MenuSlot>
            </ViewToolbar>
            <PropertyTable>
              <HeaderRow $cols={propCols} $h={16}>
                <HeaderCell $pad={6}>Property</HeaderCell>
                <HeaderCell $pad={4}>Value</HeaderCell>
                <HeaderCell $last />
              </HeaderRow>
              <GridRow $cols={propCols}>
                <Cell $pad={5}><InfoToggle />Info</Cell>
                <Cell />
                <Cell />
              </GridRow>
              {properties.map(([name, value], i) => (
                <GridRow key={i} $cols={propCols}>
                  <Cell $pad={40}>{name}</Cell>
                  <Cell>{value}</Cell>
                  <Cell />
                </GridRow>
              ))}
            </PropertyTable>
          </Panel>
          <ActivePanel $h={321}>
            <TabBar $active $short>
              <ActiveTab $short $blue $tight $pad={1} $gap={4}>
                <NetworkTabIcon light />BPELExport<CloseX light />
              </ActiveTab>
              <Curve blue short />
              <InactiveTab $tight $left={-8} $right={4}>BPELImport</InactiveTab>
              <OverflowTab>»<sub>1</sub></OverflowTab>
              <TabSpacer />
              <PanelControls />
            </TabBar>
            <ViewToolbar $h={25} $right={3}><ClearLogIcon /></ViewToolbar>
            <MessageArea>
              <HeaderRow $cols="1fr" $h={17}>
                <HeaderCell $last $pad={6}>Message</HeaderCell>
              </HeaderRow>
              {messages.map((m, i) => (
                <MessageRow key={m} $selected={i === 0}>
                  <InfoIcon selected={i === 0} />{m}
                </MessageRow>
              ))}
              <MessageFill />
              <HorizontalBar thumb={80} />
            </MessageArea>
          </ActivePanel>
        </Column>
      </Workspace>

      <StatusBar>
        <StatusGrip><GripDots /></StatusGrip>
        <StatusDivider />
      </StatusBar>
    </Page>
  );
}
